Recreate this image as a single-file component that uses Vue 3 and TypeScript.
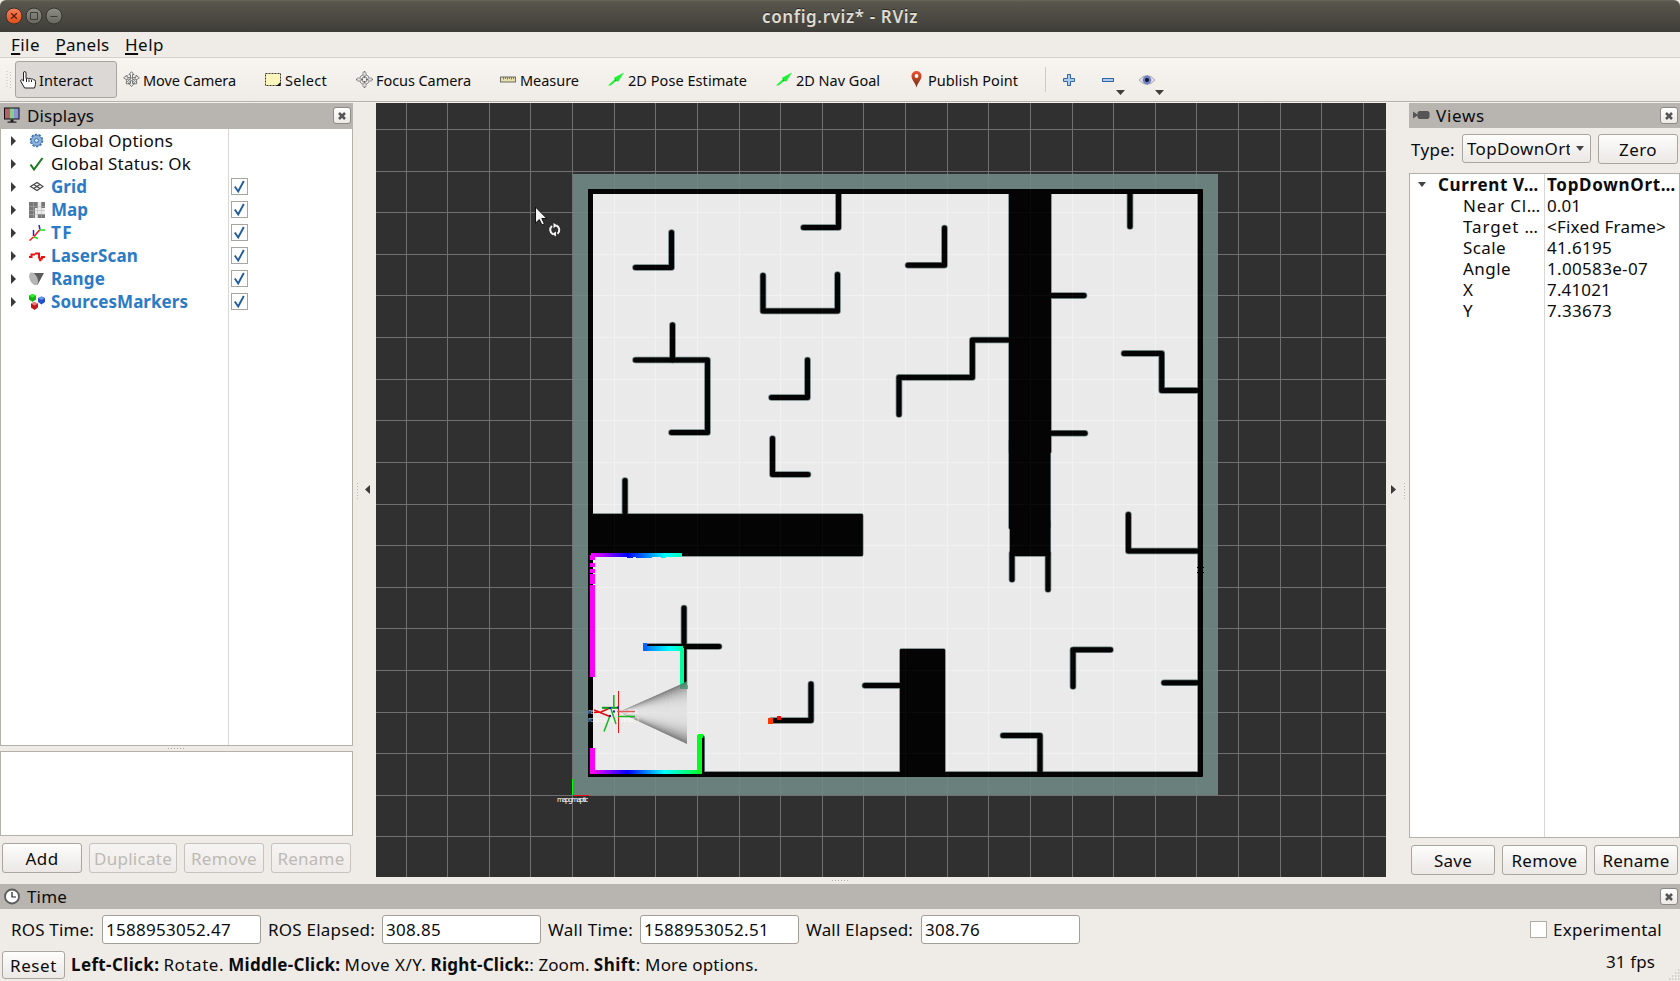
<script setup lang="ts">
interface Fitted { label: string; w: number }
interface Tool extends Fitted { icon: string; span: number }
interface Display extends Fitted { icon: string; checked: boolean }
interface Prop { name: string; nw: number; value: string; vw: number; root?: boolean }

/* Tracks a label so that it occupies the given width. */
const vFit = {
  mounted(el: HTMLElement, binding: { value: number }) {
    const range = document.createRange()
    range.selectNodeContents(el)
    const natural = range.getBoundingClientRect().width
    const count = (el.textContent ?? '').length
    if (count) el.style.letterSpacing = `${(binding.value - natural) / count}px`
  },
}

const menus: Fitted[] = [
  { label: 'File', w: 29 },
  { label: 'Panels', w: 54 },
  { label: 'Help', w: 39 },
]

const tools: Tool[] = [
  { icon: 'move', label: 'Move Camera', w: 93, span: 142 },
  { icon: 'select', label: 'Select', w: 42, span: 91 },
  { icon: 'focus', label: 'Focus Camera', w: 95, span: 144 },
  { icon: 'measure', label: 'Measure', w: 59, span: 108 },
  { icon: 'arrow', label: '2D Pose Estimate', w: 119, span: 168 },
  { icon: 'arrow', label: '2D Nav Goal', w: 84, span: 132 },
  { icon: 'pin', label: 'Publish Point', w: 90, span: 137 },
]

const displays: Display[] = [
  { icon: 'gear', label: 'Global Options', w: 122, checked: false },
  { icon: 'ok', label: 'Global Status: Ok', w: 140, checked: false },
  { icon: 'grid', label: 'Grid', w: 36, checked: true },
  { icon: 'map', label: 'Map', w: 37, checked: true },
  { icon: 'tf', label: 'TF', w: 22, checked: true },
  { icon: 'scan', label: 'LaserScan', w: 87, checked: true },
  { icon: 'range', label: 'Range', w: 54, checked: true },
  { icon: 'markers', label: 'SourcesMarkers', w: 137, checked: true },
]

const props: Prop[] = [
  { name: 'Current V…', nw: 101, value: 'TopDownOrt…', vw: 129, root: true },
  { name: 'Near Cl…', nw: 78, value: '0.01', vw: 34 },
  { name: 'Target …', nw: 76, value: '<Fixed Frame>', vw: 119 },
  { name: 'Scale', nw: 43, value: '41.6195', vw: 65 },
  { name: 'Angle', nw: 48, value: '1.00583e-07', vw: 101 },
  { name: 'X', nw: 11, value: '7.41021', vw: 64 },
  { name: 'Y', nw: 11, value: '7.33673', vw: 65 },
]

const clocks = [
  { label: 'ROS Time:', w: 83, value: '1588953052.47', vw: 125, cell: 91 },
  { label: 'ROS Elapsed:', w: 107, value: '308.85', vw: 55, cell: 114 },
  { label: 'Wall Time:', w: 85, value: '1588953052.51', vw: 125, cell: 92 },
  { label: 'Wall Elapsed:', w: 107, value: '308.76', vw: 55, cell: 115 },
]

const hints = [
  { text: 'Left-Click:', w: 92.5, gap: 4.2, bold: true },
  { text: 'Rotate.', w: 64.7, gap: 4.2, bold: false },
  { text: 'Middle-Click:', w: 116.4, gap: 4.2, bold: true },
  { text: 'Move X/Y.', w: 86, gap: 4.2, bold: false },
  { text: 'Right-Click:', w: 98.6, gap: 0, bold: true },
  { text: ':', w: 9.3, gap: 4.2, bold: false },
  { text: 'Zoom.', w: 55.3, gap: 4.2, bold: false },
  { text: 'Shift', w: 42, gap: 0, bold: true },
  { text: ': More options.', w: 122.5, gap: 0, bold: false },
]

/* Scene grid: one metre per cell. */
const CELL = 41.6195
const cols = Array.from({ length: 24 }, (_, k) => Math.floor(406.12 + CELL * k))
const rows = Array.from({ length: 18 }, (_, k) => Math.floor(129.43 + CELL * k))

const walls = [
  'M635.5 267.5H671.5V232.5',
  'M838.5 193V227.5H803.5',
  'M763 275.5V311H837.5V274.5',
  'M672.5 325V360',
  'M635.5 360H707.5V432.5H671.5',
  'M807.5 360V397.5H771.5',
  'M772.5 438.5V474.5H808',
  'M625 480.5V516',
  'M684 608V684',
  'M647 646.5H719',
  'M701.7 738V774',
  'M811 684V720.5H771.5',
  'M865 685.5H903',
  'M944.5 228V265.2H908',
  'M1012 553V579.5',
  'M1048 553V589.5',
  'M1051 295.6H1084',
  'M1051 433.3H1085',
  'M1010 340H972.4V377.4H899V414.5',
  'M1130 193V226.5',
  'M1124 353.4H1161.7V390.4H1200',
  'M1128.4 514.5V551H1200',
  'M1073 686.5V649.7H1110.5',
  'M1164 682.7H1200',
  'M1003 735.5H1040V774',
]
const blocks = [
  { x: 1009, y: 191, w: 42, h: 262 },
  { x: 1009, y: 440, w: 41.3, h: 89 },
  { x: 1010, y: 520, w: 40.3, h: 36 },
  { x: 590, y: 514, w: 272.8, h: 42 },
  { x: 900, y: 649, w: 45, h: 126 },
]

const scanEdge = [
  { y: 555, h: 4.5 }, { y: 563, h: 4 }, { y: 569, h: 4 },
  { y: 574, h: 10 }, { y: 585, h: 92 }, { y: 748, h: 26 },
]

/* Sonar cone shaded by angle: dark rims, bright axis. */
const SLICES = 46
const cone = Array.from({ length: SLICES }, (_, i) => {
  const y0 = 681.5 + (62.5 * i) / SLICES
  const y1 = 681.5 + (62.5 * (i + 1)) / SLICES
  const t = Math.abs(((i + 0.5) / SLICES) * 2 - 1)
  const g = Math.round(226 - 108 * Math.pow(t, 2.6))
  return { pts: `619,712 687,${y0} 687,${Math.min(y1 + 0.6, 744)}`, fill: `rgb(${g},${g},${g})` }
})
</script>

<template>
  <div class="window">
    <header class="titlebar">
      <svg class="lights" width="64" height="32" viewBox="0 0 64 32">
        <defs>
          <linearGradient id="lr" x2="0" y2="1"><stop offset="0" stop-color="#f9825d" /><stop offset="1" stop-color="#df4b16" /></linearGradient>
          <linearGradient id="lg" x2="0" y2="1"><stop offset="0" stop-color="#8f8e87" /><stop offset="1" stop-color="#66655e" /></linearGradient>
        </defs>
        <circle cx="14" cy="16" r="8" fill="url(#lr)" stroke="#33322d" />
        <circle cx="34" cy="16" r="8" fill="url(#lg)" stroke="#33322d" />
        <circle cx="54" cy="16" r="8" fill="url(#lg)" stroke="#33322d" />
        <path d="M11.2 13.2l5.6 5.6M16.8 13.2l-5.6 5.6" stroke="#5a1d08" stroke-width="1.3" />
        <path d="M30.5 12.5h7v7h-7zM50.5 16.5h7" fill="none" stroke="#3c3b37" />
      </svg>
      <span v-fit="156" class="caption">config.rviz* - RViz</span>
    </header>

    <nav class="menubar">
      <span v-for="m in menus" :key="m.label" v-fit="m.w" class="menu"><u>{{ m.label[0] }}</u>{{ m.label.slice(1) }}</span>
    </nav>

    <div class="toolbar">
      <svg class="grip" width="6" height="18" viewBox="0 0 6 18"><path d="M1 0v18M4.5 1v18" stroke="#c4bfb8" stroke-dasharray="1 2" /></svg>
      <button class="interact">
        <svg width="16" height="18" viewBox="0 0 16 18"><path d="M3.500 10V2q0-1.500 1.200-1.500T6 2v5.500q1-1 2.500.2 1.500-.9 2.600.4 1.600-.7 2.400.6 2-.2 2 1.800v3.200l-1 3.300H4.600L1 10.800Q0 9 1.200 8.800T3.500 10" fill="#fff" stroke="#222" /><path d="M6.500 8v3M9 8.500v2.500M11.500 9v2" stroke="#222" /></svg>
        <span v-fit="54" class="tlabel">Interact</span>
      </button>
      <div v-for="t in tools" :key="t.label" class="tool" :style="{ width: t.span + 'px' }">
        <svg v-if="t.icon === 'move'" width="17" height="17" viewBox="0 0 17 17" fill="#f6f5f2" stroke="#666" stroke-width=".9">
          <path d="M8.500 .7l2.600 3H9.500v3.200l3.500-.7v-2l3.300 2.600-3.300 2.300-.3-1.300-2.500.6 2.200 2.200 1.200-1v3.200h-3.100l.9-1-1.900-2v2.700h1.600l-2.600 3-2.600-3h1.600v-2.700l-1.900 2 .9 1H3.400V9.600l1.200 1 2.200-2.200-2.500-.6-.3 1.300L.7 6.800 4 4.200v2l3.500.7V3.700H5.900z" />
          <circle cx="8.500" cy="8.300" r="1.300" />
        </svg>
        <svg v-else-if="t.icon === 'select'" width="17" height="17" viewBox="0 0 17 17">
          <rect x=".5" y="2.500" width="15" height="12" fill="#fdf6bb" stroke="#333" stroke-dasharray="2 1" /><path d="M15.500 11v4h-4z" fill="#111" />
        </svg>
        <svg v-else-if="t.icon === 'focus'" width="17" height="17" viewBox="0 0 17 17" fill="none" stroke="#777">
          <circle cx="8.500" cy="8.500" r="5" stroke="#888" /><circle cx="8.500" cy="8.500" r="2.600" /><path d="M8.500 0v17M0 8.500h17" stroke="#666" stroke-dasharray="7 3" /><path d="M7 1h3v4H7zM7 12h3v4H7zM1 7h4v3H1zM12 7h4v3h-4z" fill="#ddd" stroke="#888" stroke-width=".7" />
        </svg>
        <svg v-else-if="t.icon === 'measure'" width="17" height="17" viewBox="0 0 17 17">
          <rect x=".5" y="6" width="15" height="5" fill="#e8dfae" stroke="#6d6d66" /><path d="M3.500 6v2.500M5.500 6v2M7.500 6v2.500M9.500 6v2M11.500 6v2.500M13.500 6v2" stroke="#666" stroke-width=".8" />
        </svg>
        <svg v-else-if="t.icon === 'arrow'" width="17" height="17" viewBox="0 0 17 17">
          <path d="M0 14.500L7 8 5.500 7 16 1.500 10 11 8.500 9.800 2.500 14.500z" fill="#1df334" /><path d="M7 8l1.800 1.800-1.300.4z" fill="#0a8a1c" />
        </svg>
        <svg v-else class="pin" width="17" height="17" viewBox="0 0 17 17">
          <defs><linearGradient id="pg" x2="0" y2="1"><stop offset="0" stop-color="#f2532f" /><stop offset="1" stop-color="#6b2d18" /></linearGradient></defs>
          <path d="M8.500 16.500C7.500 12 3.500 9 3.500 5a5 5 0 0 1 10 0c0 4-4 7-5 11.500z" fill="url(#pg)" /><circle cx="8.500" cy="5" r="1.900" fill="#fff" />
        </svg>
        <span v-fit="t.w" class="tlabel">{{ t.label }}</span>
      </div>
      <i class="sep"></i>
      <svg class="extras" width="120" height="43" viewBox="1046 58 120 43">
        <path d="M1067.500 74.500h3v4h4v3h-4v4h-3v-4h-4v-3h4z" fill="#a9cdf0" stroke="#3465a4" />
        <rect x="1102.500" y="78.500" width="11" height="3" fill="#a9cdf0" stroke="#3465a4" />
        <path d="M1116 90h9l-4.500 5zM1155 90h9l-4.500 5z" fill="#3f3e3b" />
        <path d="M1139 80q8-9 16 0-8 9-16 0z" fill="#e6e4ea" stroke="#aaa6b0" />
        <circle cx="1147" cy="80" r="4.300" fill="#6f7fc4" /><circle cx="1147" cy="80" r="2" fill="#15152e" />
      </svg>
    </div>

    <main class="workspace">
      <aside class="dock left">
        <div class="dockbar displays">
          <svg width="17" height="17" viewBox="0 0 17 17">
            <path d="M0 .5h15.500v12H0z" fill="#111" /><path d="M1 1.500h4.500v10H1z" fill="#b36068" /><path d="M5.500 1.500H10v10H5.500z" fill="#86cf8a" /><path d="M10 1.500h4.500v10H10z" fill="#8f92d8" /><path d="M6.500 12.500h3v2h-3zM3.500 14.500h9v1.300h-9z" fill="#222" />
          </svg>
          <span v-fit="67" class="grow">Displays</span>
          <i class="close"><svg width="8" height="8" viewBox="0 0 8 8"><path d="M1 1l6 6M7 1L1 7" stroke="#555" stroke-width="2.500" /></svg></i>
        </div>
        <div class="tree">
          <div v-for="d in displays" :key="d.label" class="row">
            <i class="twist"></i>
            <svg class="ico" width="16" height="16" viewBox="0 0 16 16">
              <g v-if="d.icon === 'gear'" fill="none"><circle cx="7.500" cy="7.500" r="6" stroke="#3a6ea8" stroke-width="1.500" stroke-dasharray="2.400 1.300" /><circle cx="7.500" cy="7.500" r="5.200" fill="#8db2dd" stroke="#5585be" /><circle cx="7.500" cy="7.500" r="2" fill="#d8e6f5" stroke="#3a6ea8" /></g>
              <path v-else-if="d.icon === 'ok'" d="M1.500 8.500l3.500 5L13.500 2" fill="none" stroke="#1e7a1e" stroke-width="2.100" />
              <g v-else-if="d.icon === 'grid'" fill="none" stroke="#444" stroke-width="1.100"><path d="M1.500 7.500L8 3.500l6 4-6 4z" /><path d="M4.700 5.500l6.300 4M11 5.500l-6.300 4" /></g>
              <g v-else-if="d.icon === 'map'"><path d="M0 0h16v16H0z" fill="#ececec" /><path d="M0 0h9v6H6v10H0zM12 0h4v6h-4zM9 12h7v4H9z" fill="#777" /><path d="M0 4.500h16M0 8.500h16M0 12.500h16M4.500 0v16M8.500 0v16M12.500 0v16" stroke="#b5b5b5" stroke-width=".5" /></g>
              <g v-else-if="d.icon === 'tf'" fill="none" stroke-width="1.500"><path d="M4.500 5v6M10 0l1 4.500" stroke="#2a20e0" /><path d="M11 5h5M5 12l4 1.500" stroke="#14e014" /><path d="M.5 15.500L4.500 12M5 11.500L10.500 5" stroke="#f01818" /></g>
              <path v-else-if="d.icon === 'scan'" d="M0 9h2.500V6.500H6M6 5.500h4v4l1.500 3.500v-2.500h1.500V9H16" fill="none" stroke="#f01010" stroke-width="2" />
              <g v-else-if="d.icon === 'range'"><path d="M3.500 2H15L8.500 14z" fill="#5c5c5c" /><ellipse cx="4.600" cy="7.800" rx="3.800" ry="6.800" transform="rotate(-25 4.600 7.800)" fill="#b5b5b5" /></g>
              <g v-else><path d="M0 1.500L3.500 0l3.500 1.500v4L3.500 8 0 5.500z" fill="#15b415" /><path d="M0 1.500L3.500 0l3.500 1.500L3.500 3.500z" fill="#2af52a" /><path d="M9 4l3.500-1.500L16 4v4l-3.500 2.500L9 8z" fill="#2550c8" /><path d="M9 4l3.500-1.500L16 4l-3.500 2z" fill="#6b95f5" /><path d="M2 9.500L5.500 8 9 9.500v4L5.500 16 2 13.500z" fill="#c01818" /><path d="M2 9.500L5.500 8 9 9.500l-3.500 2z" fill="#f08080" /></g>
            </svg>
            <span class="name"><b v-if="d.checked" v-fit="d.w">{{ d.label }}</b><span v-else v-fit="d.w">{{ d.label }}</span></span>
            <i v-if="d.checked" class="check"><svg width="15" height="15" viewBox="0 0 15 15"><path d="M2.800 7.500l3.400 5L11.800 2" fill="none" stroke="#1e5c9e" stroke-width="1.900" /></svg></i>
          </div>
        </div>
        <div class="split"><i></i></div>
        <div class="helpbox"></div>
        <div class="buttons">
          <button class="btn w80"><span v-fit="33">Add</span></button>
          <button class="btn w88 off"><span v-fit="78">Duplicate</span></button>
          <button class="btn w80 off"><span v-fit="66">Remove</span></button>
          <button class="btn w80 off"><span v-fit="67">Rename</span></button>
        </div>
      </aside>

      <div class="gutter"><svg width="23" height="24" viewBox="0 0 23 24"><path d="M4.500 6v17" stroke="#b9b4ad" stroke-dasharray="1 2" /><path d="M17 8v9l-5-4.500z" fill="#3a3a38" /></svg></div>

      <svg class="scene" width="1010" height="774" viewBox="376 103 1010 774">
        <defs>
          <linearGradient id="top" gradientUnits="userSpaceOnUse" x1="591" x2="682" y1="0" y2="0"><stop offset="0" stop-color="#f0f" /><stop offset=".4" stop-color="#00f" /><stop offset=".82" stop-color="#0ff" /><stop offset="1" stop-color="#00ffb4" /></linearGradient>
          <linearGradient id="bottom" gradientUnits="userSpaceOnUse" x1="592" x2="700" y1="0" y2="0"><stop offset="0" stop-color="#f0f" /><stop offset=".33" stop-color="#00f" /><stop offset=".67" stop-color="#0ff" /><stop offset="1" stop-color="#00ff30" /></linearGradient>
          <linearGradient id="mid" gradientUnits="userSpaceOnUse" x1="643" x2="684" y1="0" y2="0"><stop offset="0" stop-color="#0068ff" /><stop offset=".65" stop-color="#0ff" /><stop offset="1" stop-color="#00ffa8" /></linearGradient>
        </defs>
        <rect x="376" y="103" width="1010" height="774" fill="#303030" />
        <g fill="#707071">
          <rect v-for="x in cols" :key="'c' + x" :x="x" y="103" width="1" height="774" />
          <rect v-for="y in rows" :key="'r' + y" x="376" :y="y" width="1010" height="1" />
        </g>
        <g opacity=".9">
          <rect x="573" y="174" width="645" height="621" fill="#708986" />
          <rect x="588" y="189" width="615" height="588" rx="1" fill="#000" />
          <rect x="593" y="194" width="605" height="578" fill="#fff" />
          <path d="M1197.700 194v578M593 771.700h605" stroke="#708986" />
          <g fill="none" stroke="#708986" stroke-width="6.600" stroke-linejoin="round" stroke-linecap="round">
            <path v-for="w in walls" :key="w" :d="w" />
          </g>
          <rect v-for="b in blocks" :key="b.y + b.x" :x="b.x" :y="b.y" :width="b.w" :height="b.h" rx="1.500" fill="#000" stroke="#708986" stroke-width="1.500" />
          <rect v-for="b in blocks" :key="'f' + b.y + b.x" :x="b.x" :y="b.y" :width="b.w" :height="b.h" rx="1" fill="#000" />
          <g fill="none" stroke="#000" stroke-width="5" stroke-linejoin="round" stroke-linecap="round">
            <path v-for="w in walls" :key="w" :d="w" />
          </g>
          <path d="M588 191.500h613M588 774.500h613M1200.500 191v585M590.500 191v585" stroke="#000" stroke-width="5" />
          <path d="M1197 567.500h7M1197 572.500h7" stroke="#000" />
        </g>

        <g shape-rendering="crispEdges">
          <rect v-for="s in scanEdge" :key="s.y" x="590" :y="s.y" width="5" :height="s.h" fill="#f0f" />
          <rect x="591" y="553" width="91" height="4" fill="url(#top)" />
          <path d="M627 557h6M636 557h16M661 557h5" stroke="url(#top)" stroke-width="1.500" />
          <rect x="590" y="770" width="108" height="4" fill="url(#bottom)" />
          <rect x="697" y="735" width="5" height="39" fill="#00ff20" />
          <rect x="698" y="734" width="5" height="4" fill="#00ff20" />
          <rect x="643" y="643" width="4" height="8" fill="#0068ff" />
          <rect x="647" y="646" width="36" height="5" fill="url(#mid)" />
          <rect x="680" y="648" width="4" height="38" fill="#00ff9a" />
          <rect x="680" y="685" width="8" height="4" fill="#27cf84" />
          <rect x="768" y="718" width="5" height="6" fill="#ff3800" />
          <rect x="777" y="716" width="4" height="4" fill="#f30c00" />
        </g>

        <polygon v-for="c in cone" :key="c.pts" :points="c.pts" :fill="c.fill" />
        <path d="M680 685l7-4v8h-7z" fill="#2a8a62" opacity=".55" />
        <g class="frames">
          <text x="588" y="714" textLength="50" opacity=".75">rear_left laser_link</text>
          <text x="588" y="722" textLength="52" opacity=".75">robot base_sonar_1</text>
          <text x="557" y="802" textLength="31">mapgmaptic</text>
        </g>
        <g fill="none">
          <path d="M618.500 691v42" stroke="#f01010" />
          <path d="M594 712.500l7-.5 9-4M594 710l8 3M600 712.500l10 4" stroke="#e01010" stroke-width="1.500" />
          <path d="M617 711.500h18" stroke="#dd5a5a" stroke-width="1.500" />
          <path d="M602 707.800h16" stroke="#0a9a14" stroke-width="2" />
          <path d="M613.800 695v13" stroke="#12b81c" stroke-width="1.600" />
          <path d="M609.500 717L604 731.500M611 709l5 15M618 716.500h17" stroke="#12b81c" stroke-width="1.500" />
          <path d="M609 708h2M617 707.500h2M613 711.500h2M609 716h2" stroke="#1414e0" stroke-width="2" />
          <path d="M572.500 779v16" stroke="#0f0" />
          <path d="M573 795.500h16" stroke="#f01010" />
        </g>

        <path d="M535.500 207v16l3.800-3.400 2.600 5.300 2.500-1.200-2.600-5.200h5z" fill="#f4f4f4" stroke="#111" />
        <path d="M552 226a5 5 0 0 0 1 8.300M557.500 233.800a5 5 0 0 0-1-8.300" fill="none" stroke="#f4f4f4" stroke-width="2" />
        <path d="M553.500 223l4 2.500-4 2.500zM556 231.500l-4 2.500 4 2.500z" fill="#f4f4f4" />
      </svg>

      <div class="gutter"><svg width="23" height="24" viewBox="0 0 23 24"><path d="M5 8v9l5-4.500z" fill="#3a3a38" /><path d="M18.500 6v17" stroke="#b9b4ad" stroke-dasharray="1 2" /></svg></div>

      <aside class="dock right">
        <div class="dockbar views">
          <svg width="17" height="17" viewBox="0 0 17 17"><path d="M0 4.500l4.500 3V5.500L6 4h9l1.500 1.500v5L15 12H6l-1.500-1.500v-2L0 11.500z" fill="#555" /></svg>
          <span v-fit="49" class="grow">Views</span>
          <i class="close"><svg width="8" height="8" viewBox="0 0 8 8"><path d="M1 1l6 6M7 1L1 7" stroke="#555" stroke-width="2.500" /></svg></i>
        </div>
        <div class="typebar">
          <span class="typelabel"><span v-fit="44">Type:</span></span>
          <div class="combo"><span class="clip"><span v-fit="105">TopDownOrt</span></span><i class="down"></i></div>
          <button class="btn w80"><span v-fit="38">Zero</span></button>
        </div>
        <div class="ptree">
          <div v-for="p in props" :key="p.name" class="prow" :class="{ root: p.root }">
            <i v-if="p.root" class="down"></i>
            <span class="pname"><span v-fit="p.nw">{{ p.name }}</span></span>
            <span class="pval"><span v-fit="p.vw">{{ p.value }}</span></span>
          </div>
        </div>
        <div class="buttons">
          <button class="btn w84"><span v-fit="38">Save</span></button>
          <button class="btn w85"><span v-fit="66">Remove</span></button>
          <button class="btn w84"><span v-fit="67">Rename</span></button>
        </div>
      </aside>
      <i class="dots"></i>
    </main>

    <div class="dockbar time">
      <svg width="17" height="17" viewBox="0 0 17 17"><circle cx="8" cy="8.500" r="7" fill="#fff" stroke="#5c5c5c" stroke-width="1.800" /><path d="M8 4v5h4" fill="none" stroke="#222" stroke-width="1.200" /></svg>
      <span v-fit="40" class="grow">Time</span>
      <i class="close"><svg width="8" height="8" viewBox="0 0 8 8"><path d="M1 1l6 6M7 1L1 7" stroke="#555" stroke-width="2.500" /></svg></i>
    </div>
    <div class="clocks">
      <template v-for="c in clocks" :key="c.label">
        <span class="clabel" :style="{ width: c.cell + 'px' }"><span v-fit="c.w">{{ c.label }}</span></span>
        <span class="field"><span v-fit="c.vw">{{ c.value }}</span></span>
      </template>
      <span class="experimental"><i class="box"></i><span v-fit="109">Experimental</span></span>
    </div>
    <footer class="status">
      <button class="btn reset"><span v-fit="47">Reset</span></button>
      <span v-for="h in hints" :key="h.text" class="hint" :class="{ bold: h.bold }" :style="{ width: h.w + 'px' }"><span v-fit="h.w - h.gap">{{ h.text }}</span></span>
      <span class="fps"><span v-fit="49">31 fps</span></span>
      <svg class="resize" width="12" height="12" viewBox="0 0 12 12"><path d="M10 1h1.500M7 4h1.500M10 4h1.500M4 7h1.500M7 7h1.500M10 7h1.500M1 10h1.500M4 10h1.500M7 10h1.500M10 10h1.500" stroke="#bbb5ad" /></svg>
    </footer>
  </div>
</template>

<style>
body { background: #efebe7; }
</style>

<style scoped>
.window { width: 1680px; height: 981px; overflow: hidden; display: flex; flex-direction: column; background: #efebe7; color: #0c0c0c; font: 17px/23px "Noto Sans", "Open Sans", sans-serif; white-space: nowrap; }
.window * { box-sizing: border-box; }
svg { flex: none; display: block; }
i { display: block; flex: none; }
button { font: inherit; color: inherit; padding: 0; margin: 0; }

.titlebar { height: 32px; flex: none; display: flex; align-items: center; background: linear-gradient(#6a675c 0, #59574c 2px, #3e3d39 100%); border-radius: 6px 6px 0 0; }
.lights { width: 64px; }
.caption { margin-left: 698px; font-weight: 600; color: #dfdbd2; text-shadow: 0 -1px #2a2926; }

.menubar { height: 26px; flex: none; display: flex; padding: 1px 0 0 11px; gap: 15.500px; border-bottom: 1px solid #d5d0ca; }
.menu u { text-decoration-thickness: 1.500px; text-underline-offset: 2px; }

.toolbar { height: 45px; flex: none; display: flex; align-items: center; padding: 0 0 1px 6px; background: linear-gradient(#f8f5f1, #efebe6); border-bottom: 1px solid #f4f1ed; box-shadow: inset 0 -1px #b6b0a9; font-size: 14.500px; }
.grip { margin-right: 3px; }
.interact { width: 102px; height: 37px; display: flex; align-items: center; gap: 3px; padding-left: 4px; margin-right: 5.500px; border: 1px solid #a9a49f; border-radius: 3px; background: #dcd8d5; }
.tool { display: flex; align-items: center; gap: 3.500px; flex: none; }
.tlabel { padding-top: 2px; }
.sep { width: 1px; height: 25px; background: #cfcac4; }

.workspace { position: relative; height: 781px; flex: none; display: flex; }
.dock { display: flex; flex-direction: column; flex: none; }
.left { width: 353px; }
.right { width: 271px; }
.gutter { width: 23px; flex: none; display: flex; padding-top: 374px; }
.scene { width: 1010px; height: 774px; }
.frames { font: 7px "Noto Sans", sans-serif; fill: #fff; }
.dots { position: absolute; left: 832px; top: 777px; width: 17px; height: 1px; background: repeating-linear-gradient(90deg, #b4aea7 0 1px, transparent 1px 3px); }

.dockbar { height: 26px; flex: none; display: flex; align-items: center; padding: 0 3px 0 4px; gap: 6px; background: #b8b4b0; }
.dockbar.displays { padding: 0 2px 1px 4px; }
.dockbar.views { height: 25px; padding-right: 2px; gap: 6px; }
.dockbar.time { height: 25px; padding-right: 2px; }
.grow { flex: 1; }
.close { width: 18px; height: 17px; display: flex; align-items: center; justify-content: center; background: linear-gradient(#fff, #ece9e6); border: 1px solid #8e8a86; border-radius: 3px; }

.tree { height: 617px; border: 1px solid #b5b0aa; border-top: 0; background: linear-gradient(#d9d7d5, #d9d7d5) 227px 0 / 1px 100% no-repeat #fff; }
.row { height: 23px; display: flex; align-items: center; padding-left: 10px; }
.twist { border-left: 5px solid #3a3a38; border-top: 5px solid transparent; border-bottom: 5px solid transparent; margin-right: 13px; }
.name { width: 186px; padding-left: 6px; }
.name b { color: #2a7ac6; }
.check { width: 17px; height: 17px; border: 1px solid #aaa5a0; background: #fff; }
.split { height: 5px; display: flex; justify-content: center; align-items: center; }
.split i { width: 17px; height: 1px; background: repeating-linear-gradient(90deg, #b4aea7 0 1px, transparent 1px 3px); }
.helpbox { height: 85px; border: 1px solid #b5b0aa; background: #fff; }
.buttons { display: flex; gap: 7px; padding: 7px 0 0 2px; }
.btn { height: 30px; display: flex; align-items: center; justify-content: center; border: 1px solid #aaa59f; border-radius: 3px; background: linear-gradient(#fdfdfc, #ebe8e5); flex: none; }
.btn.off { color: #bdb9b5; border-color: #c6c2bd; background: linear-gradient(#f6f4f2, #eeebe8); }
.w80 { width: 80px; }
.w84 { width: 84px; }
.w85 { width: 85px; }
.w88 { width: 88px; }

.typebar { height: 45px; display: flex; padding: 6px 0 0 2px; }
.typelabel { width: 51px; padding-top: 4px; }
.combo { width: 129px; height: 29px; margin-right: 7px; display: flex; align-items: center; padding-left: 4px; border: 1px solid #aaa59f; border-radius: 3px; background: linear-gradient(#fdfdfc, #ebe8e5); }
.clip { width: 103px; overflow: hidden; }
.down { border-top: 5px solid #444; border-left: 4.500px solid transparent; border-right: 4.500px solid transparent; }
.combo .down { margin-left: 6px; }
.ptree { height: 665px; border: 1px solid #b5b0aa; background: linear-gradient(#d9d7d5, #d9d7d5) 134px 0 / 1px 100% no-repeat #fff; }
.prow { height: 21px; line-height: 21px; display: flex; align-items: center; padding-left: 53px; }
.prow.root { padding-left: 8px; font-weight: 700; }
.pname { width: 84px; overflow: hidden; }
.root .down { margin-right: 12px; }
.root .pname { width: 109px; }

.clocks { height: 40px; flex: none; display: flex; align-items: center; padding: 0 18px 0 11px; }
.clabel { flex: none; }
.field { width: 159px; height: 29px; flex: none; display: flex; align-items: center; padding-left: 3px; margin-right: 7px; border: 1px solid #a39e98; border-radius: 3px; background: #fff; }
.experimental { margin-left: auto; display: flex; align-items: center; gap: 6px; }
.box { width: 17px; height: 17px; background: #fff; border: 1px solid #b0aba5; }

.status { flex: 1; display: flex; position: relative; padding: 2px 0 0 2px; }
.reset { width: 63px; height: 28px; margin-right: 6px; }
.hint { flex: none; padding-top: 2px; }
.bold { font-weight: 700; }
.fps { margin-left: auto; margin-right: 25px; margin-top: -1px; }
.resize { position: absolute; right: 0; bottom: 0; }
</style>
